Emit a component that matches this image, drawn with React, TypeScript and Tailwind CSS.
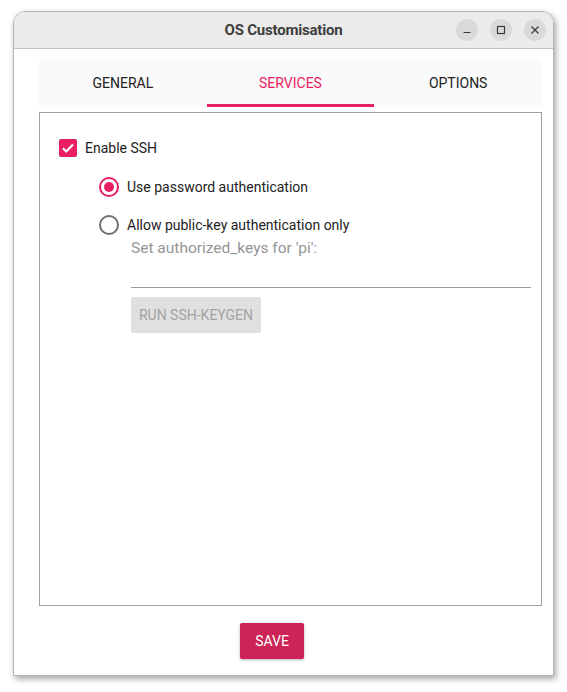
import React from "react";

export default function App() {
  return (
    <div className="w-[567px] h-[692px] bg-white pt-[11px] pl-[13px]" style={{ fontFamily: "Roboto, 'Noto Sans', sans-serif" }}>
      <div className="w-[541px] h-[665px] flex flex-col bg-white border border-[#b5b5b5] rounded-t-[12px] shadow-[2px_3px_6px_rgba(0,0,0,0.35)] overflow-hidden">
        {/* Title bar */}
        <div className="h-[37px] shrink-0 bg-[#ebebeb] border-b border-[#c4c4c4] relative flex items-center justify-center">
          <span className="text-[15px] font-bold tracking-[-0.2px] text-[#3d3d3d]" style={{ fontFamily: "Roboto, 'Noto Sans', sans-serif" }}>OS Customisation</span>
          <div className="absolute right-[7px] top-[7px] flex gap-[12px]">
            <div className="w-[22px] h-[22px] rounded-full bg-[#dadada] flex items-center justify-center">
              <svg width="10" height="10" viewBox="0 0 10 10"><path d="M1.5 7.5h7" stroke="#3a3a3a" strokeWidth="1.2" /></svg>
            </div>
            <div className="w-[22px] h-[22px] rounded-full bg-[#dadada] flex items-center justify-center">
              <svg width="10" height="10" viewBox="0 0 10 10"><rect x="1.5" y="1.5" width="7" height="7" fill="none" stroke="#3a3a3a" strokeWidth="1.2" /></svg>
            </div>
            <div className="w-[22px] h-[22px] rounded-full bg-[#dadada] flex items-center justify-center">
              <svg width="10" height="10" viewBox="0 0 10 10"><path d="M1.5 1.5l7 7M8.5 1.5l-7 7" stroke="#3a3a3a" strokeWidth="1.2" /></svg>
            </div>
          </div>
        </div>

        <div className="flex-1 flex flex-col pl-[25px] pr-[11px] pt-[10px]">
          {/* Tabs */}
          <div className="h-[48px] bg-[#fafafa] grid grid-cols-3 text-[14px]">
            <div className="flex items-center justify-center text-[#222222]">GENERAL</div>
            <div className="relative flex items-center justify-center text-[#e91e63]">
              SERVICES
              <div className="absolute left-0 right-0 bottom-0 h-[3px] bg-[#e91e63]"></div>
            </div>
            <div className="flex items-center justify-center text-[#222222]">OPTIONS</div>
          </div>

          {/* Content */}
          <div className="mt-[5px] h-[494px] border border-[#a0a0a0] pt-[26px] pl-[19px] pr-[10px] text-[14px] text-[#222222]">
            <div className="flex items-center h-[18px]">
              <div className="w-[18px] h-[18px] rounded-[2px] bg-[#e91e63] flex items-center justify-center">
                <svg width="16" height="16" viewBox="0 0 16 16"><path d="M3 8.2l3.3 3.3L13 4.6" fill="none" stroke="white" strokeWidth="2.2" /></svg>
              </div>
              <span className="ml-[8px]">Enable SSH</span>
            </div>

            <div className="pl-[40px]">
              <div className="mt-[20px] flex items-center h-[20px]">
                <div className="w-[20px] h-[20px] rounded-full border-2 border-[#e91e63] flex items-center justify-center">
                  <div className="w-[10px] h-[10px] rounded-full bg-[#e91e63]"></div>
                </div>
                <span className="ml-[8px]">Use password authentication</span>
              </div>
              <div className="mt-[18px] flex items-center h-[20px]">
                <div className="w-[20px] h-[20px] rounded-full border-2 border-[#707070]"></div>
                <span className="ml-[8px]">Allow public-key authentication only</span>
              </div>
              <div className="pl-[32px]">
                <div className="mt-[3px] text-[15.5px] text-[#959595] leading-[20px]">Set authorized_keys for 'pi':</div>
                <div className="mt-[29px] border-b border-[#9a9a9a]"></div>
                <div className="mt-[9px] w-[130px] h-[36px] rounded-[2px] bg-[#e0e0e0] text-[#a3a3a3] flex items-center justify-center">
                  RUN SSH-KEYGEN
                </div>
              </div>
            </div>
          </div>

          {/* Save */}
          <div className="mt-[17px] flex pl-[201px]">
            <div className="w-[64px] h-[36px] rounded-[2px] bg-[#cd2356] text-white text-[14px] flex items-center justify-center shadow-[0_1px_3px_rgba(0,0,0,0.3)]">SAVE</div>
          </div>
        </div>
      </div>
    </div>
  );
}
